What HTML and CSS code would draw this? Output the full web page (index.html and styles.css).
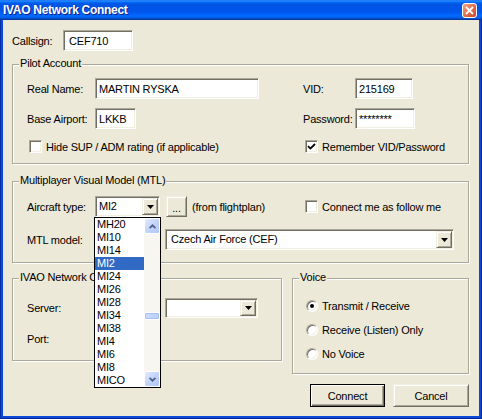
FILE: index.html
```html
<!DOCTYPE html>
<html lang="en">
<head>
    <meta charset="UTF-8">
    <meta name="viewport" content="width=device-width, initial-scale=1.0">
    <title>IVAO Network Connect</title>
    <link rel="stylesheet" href="styles.css">
</head>
<body>
    <div class="window">
        <div class="titlebar">
            <span class="title">IVAO Network Connect</span>
            <span class="close">
                <svg width="9" height="9" viewBox="0 0 9 9"><path d="M1 1 L8 8 M8 1 L1 8" stroke="#fff" stroke-width="1.8"/></svg>
            </span>
        </div>
        <div class="client">
            <div class="callsign-row">
                <label class="callsign-label" for="callsign">Callsign:</label>
                <input class="field callsign-field" id="callsign" type="text" value="CEF710">
            </div>

            <div class="group pilot">
                <span class="group-title">Pilot Account</span>
                <div class="row">
                    <div class="cell cell-left">
                        <label class="label label-left">Real Name:</label>
                        <input class="field name-field" type="text" value="MARTIN RYSKA">
                    </div>
                    <div class="cell">
                        <label class="label label-right">VID:</label>
                        <input class="field vid-field" type="text" value="215169">
                    </div>
                </div>
                <div class="row second-row">
                    <div class="cell cell-left">
                        <label class="label label-left">Base Airport:</label>
                        <input class="field airport-field" type="text" value="LKKB">
                    </div>
                    <div class="cell">
                        <label class="label label-right">Password:</label>
                        <input class="field password-field" type="text" value="********">
                    </div>
                </div>
                <div class="row check-row">
                    <div class="cell cell-left">
                        <span class="checkbox"></span>
                        <span class="check-label">Hide SUP / ADM rating (if applicable)</span>
                    </div>
                    <div class="cell">
                        <span class="checkbox"><svg width="9" height="9" viewBox="0 0 9 9"><path d="M1 4.2 L3.4 6.6 L8 2" fill="none" stroke="#000" stroke-width="1.8"/></svg></span>
                        <span class="check-label">Remember VID/Password</span>
                    </div>
                </div>
            </div>

            <div class="group mtl">
                <span class="group-title">Multiplayer Visual Model (MTL)</span>
                <div class="row">
                    <div class="cell cell-left">
                        <label class="label label-left">Aircraft type:</label>
                        <div class="combo aircraft-combo">
                            <span class="combo-text">MI2</span>
                            <span class="combo-arrow"><svg width="7" height="4" viewBox="0 0 7 4"><polygon points="0,0 7,0 3.5,4"/></svg></span>
                        </div>
                        <span class="button browse-button">...</span>
                        <span class="hint">(from flightplan)</span>
                    </div>
                    <div class="cell">
                        <span class="checkbox"></span>
                        <span class="check-label">Connect me as follow me</span>
                    </div>
                </div>
                <div class="row model-row">
                    <label class="label label-wide">MTL model:</label>
                    <div class="combo model-combo">
                        <span class="combo-text">Czech Air Force (CEF)</span>
                        <span class="combo-arrow"><svg width="7" height="4" viewBox="0 0 7 4"><polygon points="0,0 7,0 3.5,4"/></svg></span>
                    </div>
                </div>
            </div>

            <div class="bottom">
                <div class="group network">
                    <span class="group-title">IVAO Network Connection</span>
                    <div class="row">
                        <label class="label label-wide">Server:</label>
                        <div class="combo server-combo">
                            <span class="combo-text"></span>
                            <span class="combo-arrow"><svg width="7" height="4" viewBox="0 0 7 4"><polygon points="0,0 7,0 3.5,4"/></svg></span>
                        </div>
                    </div>
                    <div class="row port-row">
                        <label class="label label-left">Port:</label>
                    </div>
                </div>

                <div class="side">
                    <div class="group voice">
                        <span class="group-title">Voice</span>
                        <div class="radio-row">
                            <span class="radio checked"></span>
                            <span class="check-label">Transmit / Receive</span>
                        </div>
                        <div class="radio-row">
                            <span class="radio"></span>
                            <span class="check-label">Receive (Listen) Only</span>
                        </div>
                        <div class="radio-row last">
                            <span class="radio"></span>
                            <span class="check-label">No Voice</span>
                        </div>
                    </div>
                    <div class="actions">
                        <span class="button default-button">Connect</span>
                        <span class="button cancel-button">Cancel</span>
                    </div>
                </div>
            </div>

            <div class="dropdown">
                <div class="dropdown-items">
                    <div class="dropdown-item">MH20</div>
                    <div class="dropdown-item">MI10</div>
                    <div class="dropdown-item">MI14</div>
                    <div class="dropdown-item selected">MI2</div>
                    <div class="dropdown-item">MI24</div>
                    <div class="dropdown-item">MI26</div>
                    <div class="dropdown-item">MI28</div>
                    <div class="dropdown-item">MI34</div>
                    <div class="dropdown-item">MI38</div>
                    <div class="dropdown-item">MI4</div>
                    <div class="dropdown-item">MI6</div>
                    <div class="dropdown-item">MI8</div>
                    <div class="dropdown-item">MICO</div>
                </div>
                <div class="scrollbar">
                    <span class="scroll-btn"><svg width="7" height="5" viewBox="0 0 7 5"><path d="M0.6 4.2 L3.5 1.3 L6.4 4.2" fill="none" stroke="#4d6185" stroke-width="1.7"/></svg></span>
                    <div class="scroll-track"><div class="scroll-thumb"></div></div>
                    <span class="scroll-btn"><svg width="7" height="5" viewBox="0 0 7 5"><path d="M0.6 0.8 L3.5 3.7 L6.4 0.8" fill="none" stroke="#4d6185" stroke-width="1.7"/></svg></span>
                </div>
            </div>
        </div>
    </div>
</body>
</html>
```

FILE: styles.css
```css
*
{
    box-sizing: border-box;
}
body
{
    margin: 0;
    background: #ece9d8;
    font-family: "Liberation Sans", Arial, sans-serif;
    font-size: 11px;
    letter-spacing: -0.2px;
    color: #000;
}
.window
{
    width: 482px;
    height: 419px;
    display: flex;
    flex-direction: column;
    background: #0a48d8;
    box-shadow: inset 1px 0 0 #0831a8, inset -1px -1px 0 #002892;
}
.titlebar
{
    height: 20px;
    display: flex;
    align-items: center;
    padding: 0 5px 0 3px;
    background: linear-gradient(to bottom, #0058ee 0%, #3593ff 4%, #288eff 6%, #127dff 8%, #036ffc 10%, #0262ee 14%, #0057e5 20%, #0054e3 24%, #0055eb 56%, #005bf5 66%, #026afe 76%, #0062ef 86%, #0052d6 92%, #0040ab 94%, #003092 100%);
}
.title
{
    color: #fff;
    font-weight: bold;
    font-size: 12px;
    letter-spacing: -0.3px;
    text-shadow: 1px 1px 0 #0f1e89;
}
.close
{
    margin-left: auto;
    width: 15px;
    height: 15px;
    border: 1px solid #fff;
    border-radius: 3px;
    background: linear-gradient(135deg, #f2a58c 0%, #e2704f 50%, #c9472a 100%);
    display: flex;
    align-items: center;
    justify-content: center;
}
.client
{
    flex: 1;
    margin: 0 3px 3px;
    padding: 10px 10px 0 9px;
    background: #ece9d8;
    position: relative;
}

/* controls */
.field
{
    height: 21px;
    margin: 0;
    padding: 0 3px;
    border: 1px solid;
    border-color: #aca899 #fff #fff #aca899;
    box-shadow: inset 1px 1px 0 #716f64, inset -1px -1px 0 #f1efe2;
    background: #fff;
    font: inherit;
    letter-spacing: inherit;
    color: #000;
    outline: none;
}
.button
{
    display: flex;
    align-items: center;
    justify-content: center;
    border: 1px solid;
    border-color: #f1efe2 #716f64 #716f64 #f1efe2;
    box-shadow: inset 1px 1px 0 #fff, inset -1px -1px 0 #aca899;
    background: #ece9d8;
}
.combo
{
    display: flex;
    height: 21px;
    padding: 2px;
    border: 1px solid;
    border-color: #aca899 #fff #fff #aca899;
    box-shadow: inset 1px 1px 0 #716f64, inset -1px -1px 0 #f1efe2;
    background: #fff;
}
.combo-text
{
    flex: 1;
    padding-left: 1px;
    line-height: 15px;
    white-space: nowrap;
}
.combo-arrow
{
    width: 16px;
    margin: -1px -1px -1px 0;
    display: flex;
    align-items: center;
    justify-content: center;
    border: 1px solid;
    border-color: #f1efe2 #716f64 #716f64 #f1efe2;
    box-shadow: inset 1px 1px 0 #fff, inset -1px -1px 0 #aca899;
    background: #ece9d8;
}
.checkbox
{
    width: 13px;
    height: 13px;
    margin-left: 2px;
    flex: none;
    display: flex;
    align-items: center;
    justify-content: center;
    border: 1px solid;
    border-color: #aca899 #fff #fff #aca899;
    box-shadow: inset 1px 1px 0 #716f64, inset -1px -1px 0 #f1efe2;
    background: #fff;
}
.check-label
{
    margin-left: 4px;
    white-space: nowrap;
}
.radio
{
    width: 12px;
    height: 12px;
    flex: none;
    display: flex;
    align-items: center;
    justify-content: center;
    border-radius: 50%;
    border: 1px solid;
    border-color: #aca899 #fff #fff #aca899;
    box-shadow: inset 1px 1px 0 #716f64, inset -1px -1px 0 #f1efe2;
    background: #fff;
}
.radio.checked::after
{
    content: "";
    width: 4px;
    height: 4px;
    border-radius: 50%;
    background: #000;
}

/* layout */
.callsign-row
{
    display: flex;
    align-items: center;
    height: 21px;
}
.callsign-label
{
    width: 51px;
}
.callsign-field
{
    width: 70px;
    padding-left: 5px;
}
.group
{
    position: relative;
    border: 1px solid #aca899;
    box-shadow: inset 1px 1px 0 #fff, 1px 1px 0 #fff;
    padding-left: 14px;
}
.group-title
{
    position: absolute;
    top: -8px;
    left: 6px;
    padding: 0 1px;
    line-height: 13px;
    background: #ece9d8;
    white-space: nowrap;
}
.row
{
    display: flex;
    align-items: center;
    height: 21px;
}
.cell
{
    display: flex;
    align-items: center;
}
.cell-left
{
    width: 276px;
}
.label-left
{
    width: 68px;
}
.label-right
{
    width: 52px;
}
.label-wide
{
    width: 138px;
}
.pilot
{
    margin-top: 13px;
    padding-top: 13px;
    padding-bottom: 10px;
}
.second-row
{
    margin-top: 9px;
}
.check-row
{
    height: 13px;
    margin-top: 11px;
}
.name-field
{
    width: 164px;
}
.vid-field
{
    width: 58px;
}
.airport-field
{
    width: 41px;
}
.password-field
{
    width: 60px;
}
.mtl
{
    margin-top: 17px;
    padding-top: 14px;
    padding-bottom: 12px;
}
.aircraft-combo
{
    width: 65px;
}
.browse-button
{
    width: 21px;
    height: 21px;
    margin-left: 6px;
    padding-top: 3px;
}
.hint
{
    margin-left: 5px;
    white-space: nowrap;
}
.model-row
{
    margin-top: 12px;
}
.model-combo
{
    width: 289px;
}
.model-combo .combo-text
{
    padding-left: 3px;
}
.bottom
{
    display: flex;
    justify-content: space-between;
    align-items: flex-start;
    margin-top: 15px;
}
.network
{
    width: 270px;
    padding-top: 18px;
    padding-bottom: 11px;
}
.server-combo
{
    width: 93px;
    height: 20px;
}
.port-row
{
    margin-top: 10px;
}
.side
{
    width: 177px;
}
.voice
{
    padding: 20px 0 13px 13px;
}
.radio-row
{
    display: flex;
    align-items: center;
    height: 13px;
    margin-bottom: 11px;
}
.radio-row:nth-of-type(3)
{
    margin-bottom: 9px;
}
.radio-row.last
{
    margin-bottom: 0;
}
.actions
{
    display: flex;
    justify-content: flex-end;
    gap: 8px;
    margin-top: 10px;
}
.actions .button
{
    height: 23px;
}
.default-button
{
    width: 75px;
    border-color: #000;
    box-shadow: inset 1px 1px 0 #fff, inset -1px -1px 0 #716f64, inset -2px -2px 0 #aca899;
}
.cancel-button
{
    width: 76px;
}

/* open aircraft list */
.dropdown
{
    position: absolute;
    left: 91px;
    top: 197px;
    width: 67px;
    height: 171px;
    display: flex;
    border: 1px solid #000;
    background: #fff;
}
.dropdown-items
{
    flex: 1;
}
.dropdown-item
{
    height: 13px;
    line-height: 13px;
    padding-left: 2px;
}
.dropdown-item.selected
{
    background: #316ac5;
    color: #fff;
}
.scrollbar
{
    width: 16px;
    display: flex;
    flex-direction: column;
    background: #f7f6f1;
}
.scroll-btn
{
    height: 16px;
    display: flex;
    align-items: center;
    justify-content: center;
    border: 1px solid #fff;
    border-radius: 2px;
    background: linear-gradient(135deg, #e2eafe 0%, #c3d4fb 50%, #b1c6f6 100%);
}
.scroll-track
{
    flex: 1;
}
.scroll-thumb
{
    height: 8px;
    margin-top: 78px;
    border: 1px solid #fff;
    border-radius: 2px;
    background: linear-gradient(to right, #cddbfc, #b9cdf8);
    box-shadow: inset 0 0 0 1px #a9c0f3;
}
```
